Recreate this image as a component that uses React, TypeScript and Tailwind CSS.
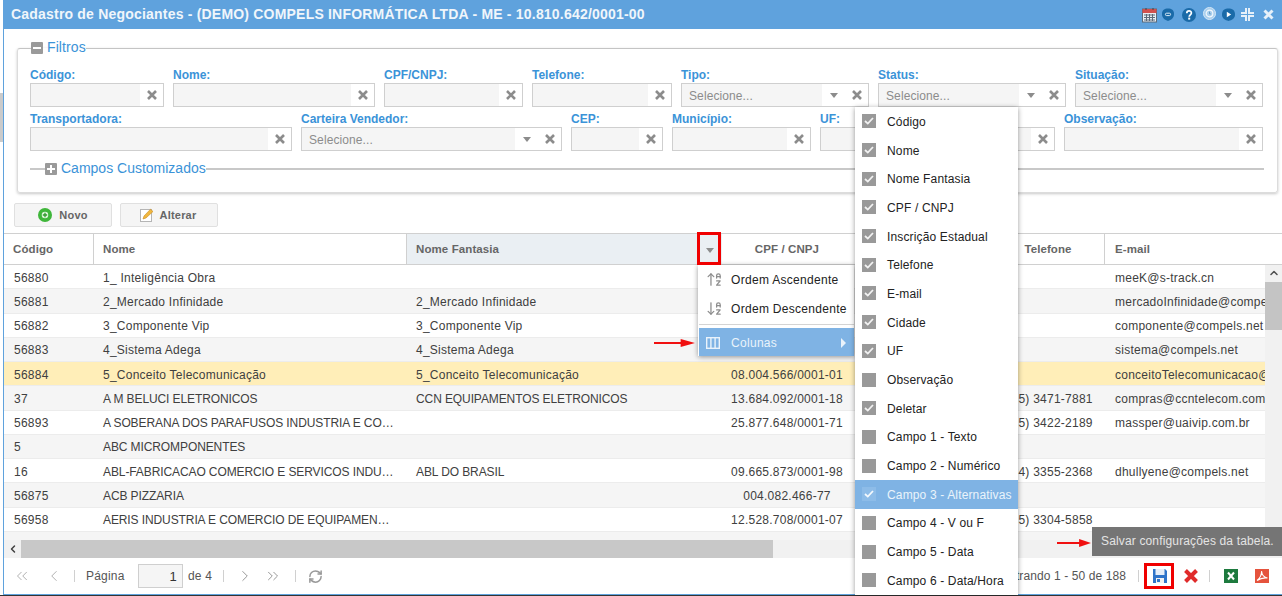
import { ChevronLeft, ChevronRight, ChevronsLeft, ChevronsRight, RefreshCw, ChevronUp, ArrowUpAZ, ArrowDownAZ } from "lucide-react"

const rows = [
  ["56880", "1_ Inteligência Obra", "", "", "", "meeK@s-track.cn"],
  ["56881", "2_Mercado Infinidade", "2_Mercado Infinidade", "", "", "mercadoInfinidade@compels.net"],
  ["56882", "3_Componente Vip", "3_Componente Vip", "", "", "componente@compels.net"],
  ["56883", "4_Sistema Adega", "4_Sistema Adega", "", "", "sistema@compels.net"],
  ["56884", "5_Conceito Telecomunicação", "5_Conceito Telecomunicação", "08.004.566/0001-01", "", "conceitoTelecomunicacao@compels.net"],
  ["37", "A M BELUCI ELETRONICOS", "CCN EQUIPAMENTOS ELETRONICOS", "13.684.092/0001-18", "(35) 3471-7881", "compras@ccntelecom.com.br"],
  ["56893", "A SOBERANA DOS PARAFUSOS INDUSTRIA E COMERCIO LTDA", "", "25.877.648/0001-71", "(35) 3422-2189", "massper@uaivip.com.br"],
  ["5", "ABC MICROMPONENTES", "", "", "", ""],
  ["16", "ABL-FABRICACAO COMERCIO E SERVICOS INDUSTRIAIS LTDA", "ABL DO BRASIL", "09.665.873/0001-98", "(34) 3355-2368", "dhullyene@compels.net"],
  ["56875", "ACB PIZZARIA", "", "004.082.466-77", "", ""],
  ["56958", "AERIS INDUSTRIA E COMERCIO DE EQUIPAMENTOS LTDA", "", "12.528.708/0001-07", "(35) 3304-5858", ""],
  ["", "", "", "", "", ""],
]

const menuColumns: [string, boolean][] = [
  ["Código", true],
  ["Nome", true],
  ["Nome Fantasia", true],
  ["CPF / CNPJ", true],
  ["Inscrição Estadual", true],
  ["Telefone", true],
  ["E-mail", true],
  ["Cidade", true],
  ["UF", true],
  ["Observação", false],
  ["Deletar", true],
  ["Campo 1 - Texto", false],
  ["Campo 2 - Numérico", false],
  ["Campo 3 - Alternativas", true],
  ["Campo 4 - V ou F", false],
  ["Campo 5 - Data", false],
  ["Campo 6 - Data/Hora", false],
]

// nomes em maiusculas ficam mais estreitos na referencia
const nameTracking = (text: string) => (text === text.toUpperCase() ? "tracking-[-0.1px]" : "tracking-[0.25px]")

function ClearIcon() {
  return (
    <svg width="10" height="10" viewBox="0 0 10 10" className="text-[#8c8c8c]">
      <path d="M1 1 L9 9 M9 1 L1 9" stroke="currentColor" strokeWidth="2.6" />
    </svg>
  )
}

function Field({ label, width, select }: { label: string; width: string; select?: boolean }) {
  return (
    <div className={`${width} shrink-0`}>
      <div className="h-[15px] text-[12px] leading-[15px] font-bold text-[#3b93d8] whitespace-nowrap">{label}</div>
      <div className="flex h-[24px] border border-[#cfcfcf] bg-white">
        <div className="flex-1 min-w-0 bg-[#f5f5f5] pl-[7px] text-[12px] leading-[25px] tracking-[0.1px] text-[#8c8c8c]">
          {select ? "Selecione..." : ""}
        </div>
        {select && (
          <div className="flex w-[23px] items-center justify-center">
            <div className="h-0 w-0 border-x-[4.5px] border-t-[5px] border-x-transparent border-t-[#8c8c8c]" />
          </div>
        )}
        <div className="flex w-[23px] items-center justify-center">
          <ClearIcon />
        </div>
      </div>
    </div>
  )
}

function RedArrow({ className }: { className: string }) {
  return (
    <svg viewBox="0 0 40 8" className={className} preserveAspectRatio="none">
      <path d="M0 3 H26 V0 L40 4 L26 8 V5 H0 Z" fill="#f01010" />
    </svg>
  )
}

function TitleIcons() {
  return (
    <div className="flex items-center">
      <svg width="15" height="16" viewBox="0 0 15 16">
        <rect x="0.5" y="2" width="14" height="13" fill="#e8eef4" stroke="#5d6b7a" />
        <rect x="0.5" y="2" width="14" height="4" fill="#d2504e" />
        <path d="M2 8h11M2 10.5h11M2 13h11M4.5 7v7M7.5 7v7M10.5 7v7" stroke="#5d6b7a" strokeWidth="1" />
        <path d="M4 1v2M11 1v2" stroke="#444" strokeWidth="1" />
      </svg>
      <svg width="12" height="13" viewBox="0 0 12 13" className="ml-[5px]">
        <path d="M6 0.5 C9.5 0.5 12 2 12 6 C12 10 9 12 6 13 C3 12 0 10 0 6 C0 2 2.5 0.5 6 0.5 Z" fill="#1a6aa8" />
        <rect x="3.4" y="5.2" width="5.2" height="2.4" rx="1.2" fill="none" stroke="#dcecf8" strokeWidth="1" />
      </svg>
      <svg width="14" height="14" viewBox="0 0 14 14" className="ml-[8px]">
        <circle cx="7" cy="7" r="7" fill="#1a6aa8" />
        <path d="M4.8 5.2c0-3 4.6-3 4.6-.1 0 1.8-2.2 1.8-2.2 3.7" fill="none" stroke="#fff" strokeWidth="1.7" />
        <rect x="6.2" y="9.6" width="2" height="2" fill="#fff" />
      </svg>
      <svg width="13" height="13" viewBox="0 0 14 14" className="ml-[7px] -mt-[2px]">
        <circle cx="7" cy="7" r="6.5" fill="#a9cfee" stroke="#d9e9f6" />
        <circle cx="7" cy="7" r="3.6" fill="none" stroke="#f3f8fc" strokeWidth="1.2" />
        <path d="M7 5v2.4h1.4" stroke="#5c93bd" fill="none" />
      </svg>
      <svg width="13" height="13" viewBox="0 0 13 13" className="ml-[6px]">
        <path d="M6.5 0.5 C10 0.5 13 2 13 6.5 C13 10.5 10 12 6.5 13 C3 12 0 10.5 0 6.5 C0 2 3 0.5 6.5 0.5 Z" fill="#1a6aa8" />
        <path d="M4.8 3.8 L9.2 6.5 L4.8 9.2 Z" fill="#fff" />
      </svg>
      <svg width="13" height="13" viewBox="0 0 13 13" className="ml-[6px]" fill="none" stroke="#e6f0f9" strokeWidth="2">
        <path d="M5 0v5H0M8 0v5h5M5 13V8H0M8 13V8h5" />
      </svg>
      <svg width="11" height="11" viewBox="0 0 11 11" className="ml-[9px]">
        <path d="M1.5 1.5 L9.5 9.5 M9.5 1.5 L1.5 9.5" stroke="#e6f0f9" strokeWidth="3" />
      </svg>
    </div>
  )
}

function FooterSep() {
  return <div className="h-[12px] w-px bg-[#d0d0d0]" />
}

function SortIcon({ down }: { down?: boolean }) {
  const Icon = down ? ArrowDownAZ : ArrowUpAZ
  return <Icon size={17} strokeWidth={1.8} className="text-[#8d8d8d]" />
}

export default function App() {
  return (
    <div className="relative flex h-[596px] w-[1282px] flex-col overflow-hidden bg-white font-['Liberation_Sans',Arial,sans-serif] text-[12px]">
      <div className="flex min-h-0 flex-1">
        {/* faixa atras da janela */}
        <div className="w-[3px] shrink-0">
          <div className="mt-[93px] h-[49px] bg-[#cbcbcb]" />
        </div>

        <div className="flex min-w-0 flex-1 flex-col border-b border-l border-[#5fa2dd]">
          {/* Title bar */}
          <div className="-ml-px flex h-[29px] shrink-0 items-center justify-between bg-[#5fa2dd] pl-[8px] pr-[8px]">
            <h1 className="text-[14px] font-bold tracking-[0.2px] text-[#f0f6fb]">
              Cadastro de Negociantes - (DEMO) COMPELS INFORMÁTICA LTDA - ME - 10.810.642/0001-00
            </h1>
            <TitleIcons />
          </div>

          {/* Filtros */}
          <fieldset className="ml-[13px] mr-[4px] mt-[11px] h-[153px] shrink-0 rounded-[3px] border border-[#dcdcdc] border-t-[#c4c4c4] px-[12px] pt-[12px] shadow-[0_1px_3px_rgba(0,0,0,0.22)]">
            <legend className="ml-[1px] flex h-[16px] items-center gap-[4px] text-[14px] leading-[14px] text-[#3b93d8]">
              <span className="flex h-[12px] w-[12px] items-center justify-center rounded-[1px] bg-[#9a9a9a]">
                <span className="h-[2px] w-[8px] bg-white" />
              </span>
              <span className="pb-[2px] tracking-[0.1px]">Filtros</span>
            </legend>
            <div className="flex gap-[9px]">
              <Field label="Código:" width="w-[134px]" />
              <Field label="Nome:" width="w-[202px]" />
              <Field label="CPF/CNPJ:" width="w-[139px]" />
              <Field label="Telefone:" width="w-[140px]" />
              <Field label="Tipo:" width="w-[188px]" select />
              <Field label="Status:" width="w-[188px]" select />
              <Field label="Situação:" width="w-[188px]" select />
            </div>
            <div className="mt-[5px] flex gap-[9px]">
              <Field label="Transportadora:" width="w-[262px]" />
              <Field label="Carteira Vendedor:" width="w-[261px]" select />
              <Field label="CEP:" width="w-[92px]" />
              <Field label="Município:" width="w-[139px]" />
              <Field label="UF:" width="w-[235px]" />
              <Field label="Observação:" width="w-[199px]" />
            </div>
            <fieldset className="mt-[10px] mr-px border-t-2 border-[#c8c8c8]">
              <legend className="ml-[15px] flex h-[16px] items-center gap-[4px] text-[14px] leading-[14px] text-[#3b93d8]">
                <span className="relative flex h-[12px] w-[12px] items-center justify-center rounded-[1px] bg-[#9a9a9a]">
                  <span className="h-[2px] w-[8px] bg-white" />
                  <span className="absolute h-[8px] w-[2px] bg-white" />
                </span>
                <span className="pb-[2px]">Campos Customizados</span>
              </legend>
            </fieldset>
          </fieldset>

          {/* Buttons */}
          <div className="ml-[10px] mt-[10px] flex h-[24px] shrink-0 gap-[8px]">
            <button className="flex w-[98px] items-center justify-center gap-[7px] rounded-[2px] border border-[#e0e0e0] bg-[#f5f5f5] text-[11px] font-bold tracking-[0.2px] text-[#666]">
              <svg width="14" height="14" viewBox="0 0 13 13">
                <circle cx="6.5" cy="6.5" r="6.5" fill="#3fb63a" />
                <circle cx="6.5" cy="6.5" r="3" fill="#dff5dc" />
                <path d="M4.5 6.5h4M6.5 4.5v4" stroke="#2f9a2b" strokeWidth="1.2" />
              </svg>
              Novo
            </button>
            <button className="flex w-[98px] items-center justify-center gap-[6px] rounded-[2px] border border-[#e0e0e0] bg-[#f5f5f5] pr-[2px] text-[11px] font-bold tracking-[0.2px] text-[#666]">
              <svg width="14" height="14" viewBox="0 0 14 14">
                <rect x="0.5" y="1.5" width="11" height="12" fill="#fff" stroke="#b5b5b5" />
                <path d="M3 11 L4 8 L10.5 1.2 L13 3.5 L6 10 Z" fill="#f0b73e" stroke="#c98a1e" strokeWidth="0.6" />
              </svg>
              Alterar
            </button>
          </div>

          {/* Grid header */}
          <div className="mt-[6px] grid h-[32px] shrink-0 grid-cols-[90px_313px_315px_130px_143px_110px_1fr] border-y border-[#d0d0d0] text-[11.5px] font-bold tracking-[0.1px] text-[#666]">
            <div className="flex items-center border-r border-[#d0d0d0] pl-[9px] pt-[2px]">Código</div>
            <div className="flex items-center border-r border-[#d0d0d0] pl-[9px] pt-[2px]">Nome</div>
            <div className="flex items-center justify-between bg-[#eaeff3] pl-[9px] pt-[2px]">
              Nome Fantasia
              <div className="flex w-[25px] items-center justify-center self-stretch">
                <div className="h-0 w-0 border-x-[4.5px] border-t-[5px] border-x-transparent border-t-[#8c8c8c]" />
              </div>
            </div>
            <div className="flex items-center justify-center pt-[2px]">CPF / CNPJ</div>
            <div className="flex items-center justify-center pt-[2px]">Inscrição Estadual</div>
            <div className="flex items-center justify-center border-r border-[#d0d0d0] pr-[3px] pt-[2px]">Telefone</div>
            <div className="flex items-center pl-[10px] pt-[2px]">E-mail</div>
          </div>

          {/* Grid body */}
          <div className="flex min-h-0 flex-1">
            <div className="min-w-0 flex-1 overflow-hidden">
              {rows.map((row, i) => (
                <div
                  key={i}
                  className={`grid h-[24.25px] grid-cols-[89px_313px_316px_130px_143px_110px_160px] items-center border-b border-[#ececec] pt-[2px] text-[12px] tracking-[0.25px] text-[#404040] ${
                    i === 4 ? "bg-[#ffeeb8]" : i % 2 === 1 ? "bg-[#f5f5f5]" : "bg-white"
                  }`}
                >
                  <div className="truncate pl-[10px]">{row[0]}</div>
                  <div className={`truncate pl-[10px] pr-[10px] ${nameTracking(row[1])}`}>{row[1]}</div>
                  <div className={`truncate pl-[10px] pr-[10px] ${nameTracking(row[2])}`}>{row[2]}</div>
                  <div className="truncate text-center">{row[3]}</div>
                  <div />
                  <div className="truncate text-center">{row[4]}</div>
                  <div className="overflow-hidden whitespace-nowrap pl-[10px]">{row[5]}</div>
                </div>
              ))}
            </div>
            <div className="flex w-[17px] shrink-0 flex-col items-center bg-[#f1f1f1]">
              <ChevronUp size={12} strokeWidth={3} className="mt-[2px] text-[#505050]" />
              <div className="mt-[3px] h-[48px] w-full bg-[#c4c4c4]" />
            </div>
          </div>

          {/* Horizontal scrollbar */}
          <div className="flex h-[18px] shrink-0 bg-[#f1f1f1]">
            <div className="flex w-[17px] items-center justify-center">
              <ChevronLeft size={12} strokeWidth={3} className="text-[#404040]" />
            </div>
            <div className="w-[752px] bg-[#c8c8c8]" />
          </div>

          {/* Toolbar */}
          <div className="flex h-[36px] shrink-0 items-center text-[12px] tracking-[0.2px] text-[#555]">
            <ChevronsLeft size={18} strokeWidth={1.2} className="ml-[9px] text-[#a8a8a8]" />
            <ChevronLeft size={18} strokeWidth={1.2} className="ml-[14px] text-[#a8a8a8]" />
            <div className="ml-[11px]"><FooterSep /></div>
            <span className="ml-[11px] w-[52px]">Página</span>
            <div className="h-[24px] w-[45px] border border-[#cfcfcf] bg-[#f5f5f5] pr-[5px] text-right text-[13px] leading-[24px] text-[#333]">1</div>
            <span className="ml-[5px] w-[35px]">de 4</span>
            <FooterSep />
            <ChevronRight size={18} strokeWidth={1.2} className="ml-[12px] text-[#8c8c8c]" />
            <ChevronsRight size={18} strokeWidth={1.2} className="ml-[10px] text-[#8c8c8c]" />
            <div className="ml-[13px]"><FooterSep /></div>
            <RefreshCw size={15} strokeWidth={2.4} className="ml-[12px] text-[#999]" />

            <span className="ml-auto whitespace-nowrap tracking-[0.1px]">Mostrando 1 - 50 de 188</span>
            <div className="ml-[12px]"><FooterSep /></div>
            <svg width="16" height="16" viewBox="0 0 16 16" className="ml-[13px]">
              <path d="M1 1 H13 L15 3 V15 H1 Z" fill="#2f74c9" />
              <rect x="3.5" y="1" width="9" height="6" fill="#e6eef8" />
              <rect x="4" y="10" width="8" height="5" fill="#f2f2f2" />
              <rect x="5" y="11" width="3" height="3" fill="#2f74c9" />
            </svg>
            <svg width="16" height="16" viewBox="0 0 16 16" className="ml-[15px]">
              <path d="M2.5 2.5 L13.5 13.5 M13.5 2.5 L2.5 13.5" stroke="#e02b2b" strokeWidth="4" />
            </svg>
            <div className="ml-[10px]"><FooterSep /></div>
            <svg width="14" height="14" viewBox="0 0 14 14" className="ml-[14px]">
              <rect width="14" height="14" fill="#1d7a3e" />
              <path d="M4 3.5 L10 10.5 M10 3.5 L4 10.5" stroke="#fff" strokeWidth="2" />
            </svg>
            <svg width="14" height="14" viewBox="0 0 14 14" className="ml-[17px] mr-[13px]">
              <rect width="14" height="14" fill="#e5533d" />
              <path d="M2 11.5 C5 9.5 7 5 6.5 2 C7 6 9 8.5 12.5 9 C9 8.6 5 9.5 2 11.5 Z" fill="none" stroke="#fff" strokeWidth="1.1" />
            </svg>
          </div>
        </div>
      </div>
      <div className="h-px shrink-0 bg-[#333]" />

      {/* Sort menu */}
      <div className="absolute left-[698px] top-[265px] w-[156px] bg-white pl-px shadow-[0_1px_5px_rgba(0,0,0,0.4)] text-[12px] tracking-[0.3px] text-[#222]">
        <div className="flex h-[29px] items-center pl-[7px]">
          <SortIcon />
          <span className="ml-[8px]">Ordem Ascendente</span>
        </div>
        <div className="flex h-[29px] items-center pl-[7px]">
          <SortIcon down />
          <span className="ml-[8px] whitespace-nowrap">Ordem Descendente</span>
        </div>
        <div className="mt-[1px] h-px bg-[#d4d4d4]" />
        <div className="mt-[3px] flex h-[28px] items-center bg-[#7fb3e4] pl-[7px] pt-[1px] text-[#eaf3fb]">
          <svg width="14" height="12" viewBox="0 0 14 12" fill="none" stroke="#eaf3fb" strokeWidth="1.4">
            <rect x="0.7" y="0.7" width="12.6" height="10.6" />
            <path d="M4.9 1v10M9.1 1v10" />
          </svg>
          <span className="ml-[11px]">Colunas</span>
          <div className="ml-auto mr-[8px] h-0 w-0 border-y-[5px] border-l-[5px] border-y-transparent border-l-[#eaf3fb]" />
        </div>
      </div>

      {/* Columns menu */}
      <div className="absolute left-[855px] top-[107px] w-[163px] bg-white shadow-[0_1px_5px_rgba(0,0,0,0.4)] text-[12px] tracking-[0.15px] text-[#222]">
        {menuColumns.map(([name, checked]) => {
          const active = name === "Campo 3 - Alternativas"
          return (
            <div key={name} className={`flex h-[28.7px] items-center pl-[7px] ${active ? "bg-[#7fb3e4] text-[#eaf3fb]" : ""}`}>
              <span className={`flex h-[14px] w-[14px] items-center justify-center ${active ? "bg-[#8dbce8]" : "bg-[#999]"}`}>
                {checked && (
                  <svg width="10" height="8" viewBox="0 0 10 8" fill="none" stroke={active ? "#f4f9fd" : "#f2f2f2"} strokeWidth="1.8">
                    <path d="M1 4 L3.8 6.6 L9 1" />
                  </svg>
                )}
              </span>
              <span className="ml-[11px] whitespace-nowrap pt-[1px]">{name}</span>
            </div>
          )
        })}
      </div>

      {/* Tooltip */}
      <div className="absolute left-[1092px] top-[527px] h-[29px] w-[190px] bg-[#757575] pl-[9px] text-[12px] leading-[29px] tracking-[0.15px] text-[#e4e4e4]">
        Salvar configurações da tabela.
      </div>

      {/* Anotacoes em vermelho */}
      <div className="absolute left-[697px] top-[232px] h-[33px] w-[24px] border-[3px] border-[#f00000]" />
      <div className="absolute left-[1144px] top-[563px] h-[26px] w-[30px] border-[3px] border-[#f00000]" />
      <RedArrow className="absolute left-[654px] top-[339px] h-[8px] w-[41px]" />
      <RedArrow className="absolute left-[1057px] top-[539px] h-[8px] w-[34px]" />
    </div>
  )
}
